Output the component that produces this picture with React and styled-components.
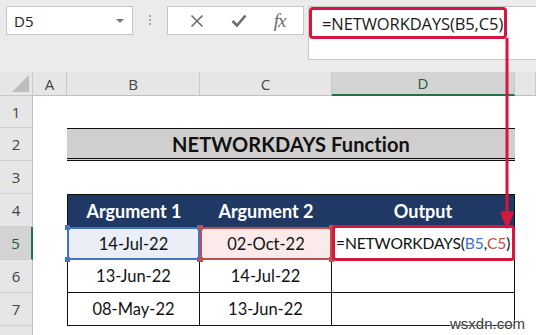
import React from "react";
import styled, { createGlobalStyle, css } from "styled-components";

const GlobalStyle = createGlobalStyle`
  html, body { margin: 0; padding: 0; background: #ffffff; }
  body { font-family: "Open Sans", "Noto Sans", sans-serif; }
`;

const ACCENT = "#d5173f";
const GREEN = "#217346";
const BLUE = "#4472c4";
const RED = "#c0504d";
const COLS = "33px 34px 133px 132px 183px 21px";

const Window = styled.div`
  position: relative;
  width: 536px;
  height: 335px;
  overflow: hidden;
  background: #ffffff;
`;

const FormulaBar = styled.div`
  display: flex;
  align-items: flex-start;
  height: 72px;
  padding: 6px 0 0 6px;
  box-sizing: border-box;
  background: #ebebeb;
`;

const NameBox = styled.div`
  display: flex;
  align-items: center;
  justify-content: space-between;
  width: 127px;
  height: 29px;
  box-sizing: border-box;
  padding: 0 8px 0 7px;
  background: #ffffff;
  border: 1px solid #c6c6c6;
  font-size: 15px;
  color: #222;
`;

const Caret = styled.span`
  width: 0;
  height: 0;
  border-left: 4px solid transparent;
  border-right: 4px solid transparent;
  border-top: 4px solid #777;
`;

const Grip = styled.div`
  display: flex;
  flex-direction: column;
  gap: 2px;
  margin: 9px 16px 0 16px;
  span {
    width: 2px;
    height: 2px;
    background: #a8a8a8;
  }
`;

const ButtonGroup = styled.div`
  display: flex;
  align-items: center;
  justify-content: space-around;
  width: 137px;
  height: 29px;
  box-sizing: border-box;
  padding: 0 4px 0 8px;
  background: #ffffff;
  border: 1px solid #c6c6c6;
`;

const Fx = styled.span`
  font-family: "Liberation Serif", serif;
  font-style: italic;
  font-size: 19px;
  color: #6b6b6b;
  letter-spacing: -1px;
`;

const FormulaInput = styled.div`
  flex: 1;
  height: 54px;
  margin-left: 4px;
  background: #ffffff;
  border: 1px solid #c6c6c6;
  border-right: none;
  box-sizing: border-box;
`;

const Highlight = styled.div`
  display: flex;
  align-items: center;
  width: 198px;
  height: 32px;
  box-sizing: border-box;
  padding-left: 10px;
  border: 3px solid ${ACCENT};
  border-radius: 4px;
  font-size: 16.5px;
  letter-spacing: -0.1px;
  color: #1a1a1a;
  white-space: nowrap;
`;

const Row = styled.div`
  display: grid;
  grid-template-columns: ${COLS};
  height: ${(p) => p.$h}px;
`;

const Corner = styled.div`
  position: relative;
  background: #e6e6e6;
  border-right: 1px solid #c8c8c8;
  border-bottom: 1px solid #c8c8c8;
  &::after {
    content: "";
    position: absolute;
    right: 3px;
    bottom: 3px;
    border-left: 17px solid transparent;
    border-bottom: 17px solid #bdbdbd;
  }
`;

const ColHead = styled.div`
  display: flex;
  align-items: center;
  justify-content: center;
  font-size: 15px;
  color: #444;
  background: ${(p) => (p.$active ? "#d3d3d3" : "#e6e6e6")};
  border-right: 1px solid #c8c8c8;
  box-sizing: border-box;
  border-bottom: ${(p) => (p.$active ? `2px solid ${GREEN}` : "1px solid #bfbfbf")};
  ${(p) => p.$active && css`color: #1e5a3a;`}
`;

const RowHead = styled.div`
  display: flex;
  align-items: center;
  justify-content: center;
  font-size: 15px;
  color: #444;
  box-sizing: border-box;
  background: ${(p) => (p.$active ? "#d3d3d3" : "#e6e6e6")};
  border-bottom: 1px solid #cfcfcf;
  border-right: ${(p) => (p.$active ? `2px solid ${GREEN}` : "1px solid #bfbfbf")};
  ${(p) => p.$active && css`color: #1e5a3a;`}
`;

const Cell = styled.div`
  position: relative;
  display: flex;
  align-items: center;
  justify-content: ${(p) => (p.$left ? "flex-start" : "center")};
  box-sizing: border-box;
  font-family: "Lato", "Carlito", sans-serif;
  font-size: 16px;
  color: #111;
  white-space: nowrap;
  background: ${(p) => p.$bg || "#ffffff"};
  grid-column: ${(p) => (p.$span ? `span ${p.$span}` : "auto")};
`;

const Title = styled(Cell)`
  font-weight: 700;
  font-size: 20px;
  letter-spacing: 0.1px;
  background: #d0cece;
  border-top: 1px solid #111;
  border-bottom: 3px double #111;
`;

const HeadCell = styled(Cell)`
  background: #203864;
  color: #ffffff;
  font-weight: 700;
  font-size: 18px;
  border-top: 1px solid #111;
  ${(p) => p.$first && css`border-left: 1px solid #111;`}
  ${(p) => p.$last && css`border-right: 1px solid #111;`}
`;

const DataCell = styled(Cell)`
  border-right: 1px solid #111;
  border-bottom: 1px solid #111;
  font-size: 16.5px;
  ${(p) => p.$first && css`border-left: 1px solid #111;`}
`;

const RefCell = styled(Cell)`
  border: 2px solid ${(p) => p.$tone};
  font-size: 16.5px;
`;

const Handle = styled.span`
  position: absolute;
  width: 5px;
  height: 5px;
  background: ${(p) => p.$tone};
  ${(p) => (p.$top ? "top: -4px;" : "bottom: -4px;")}
  ${(p) => (p.$right ? "right: -4px;" : "left: -4px;")}
  z-index: 2;
`;

const ActiveCell = styled(Cell)`
  border-right: 1px solid #111;
  border-bottom: 2px solid ${GREEN};
  overflow: visible;
`;

const Callout = styled.div`
  position: absolute;
  left: 0;
  right: -1px;
  top: -2px;
  bottom: -3px;
  display: flex;
  align-items: center;
  padding-left: 1px;
  border: 3px solid ${ACCENT};
  border-radius: 4px;
  font-size: 15.6px;
  letter-spacing: -0.15px;
  z-index: 3;
`;

const Ref = styled.span`
  color: ${(p) => p.$tone};
`;

const Blank = styled.div`
  background: #ffffff;
`;

const Arrow = styled.svg`
  position: absolute;
  left: 500px;
  top: 38px;
  z-index: 4;
`;

const Watermark = styled.div`
  position: absolute;
  right: 11px;
  bottom: 3px;
  font-family: "Liberation Sans", Arial, sans-serif;
  font-size: 15px;
  color: #3a3a3a;
  text-shadow: 0 0 2px #fff, 0 0 2px #fff;
  z-index: 5;
`;

function Corners({ tone }) {
  return (
    <>
      <Handle $tone={tone} $top />
      <Handle $tone={tone} $top $right />
      <Handle $tone={tone} />
      <Handle $tone={tone} $right />
    </>
  );
}

function Formula() {
  return (
    <>
      =NETWORKDAYS(<Ref $tone={BLUE}>B5</Ref>,<Ref $tone={RED}>C5</Ref>)
    </>
  );
}

const rows = [
  ["13-Jun-22", "14-Jul-22"],
  ["08-May-22", "13-Jun-22"],
];

export default function App() {
  return (
    <Window>
      <GlobalStyle />
      <FormulaBar>
        <NameBox>
          D5
          <Caret />
        </NameBox>
        <Grip>
          <span />
          <span />
          <span />
        </Grip>
        <ButtonGroup>
          <svg width="14" height="14" viewBox="0 0 14 14">
            <path d="M1.5 1.5l11 11M12.5 1.5l-11 11" stroke="#6b6b6b" strokeWidth="1.6" />
          </svg>
          <svg width="16" height="13" viewBox="0 0 16 13">
            <path d="M1.5 7l4.5 4.5L14.5 1.5" stroke="#6b6b6b" strokeWidth="2.6" fill="none" />
          </svg>
          <Fx>fx</Fx>
        </ButtonGroup>
        <FormulaInput>
          <Highlight>=NETWORKDAYS(B5,C5)</Highlight>
        </FormulaInput>
      </FormulaBar>

      <Row $h={24}>
        <Corner />
        <ColHead>A</ColHead>
        <ColHead>B</ColHead>
        <ColHead>C</ColHead>
        <ColHead $active>D</ColHead>
        <ColHead />
      </Row>

      <Row $h={32}>
        <RowHead>1</RowHead>
        <Blank />
      </Row>

      <Row $h={33}>
        <RowHead>2</RowHead>
        <Blank />
        <Title $span={3}>NETWORKDAYS Function</Title>
        <Blank />
      </Row>

      <Row $h={33}>
        <RowHead>3</RowHead>
        <Blank />
      </Row>

      <Row $h={33}>
        <RowHead>4</RowHead>
        <Blank />
        <HeadCell $first>Argument 1</HeadCell>
        <HeadCell>Argument 2</HeadCell>
        <HeadCell $last>Output</HeadCell>
        <Blank />
      </Row>

      <Row $h={33}>
        <RowHead $active>5</RowHead>
        <Blank />
        <RefCell $tone={BLUE} $bg="#e9eef7">
          14-Jul-22
          <Corners tone={BLUE} />
        </RefCell>
        <RefCell $tone={RED} $bg="#fbeaea">
          02-Oct-22
          <Corners tone={RED} />
        </RefCell>
        <ActiveCell $left>
          <Callout>
            <Formula />
          </Callout>
        </ActiveCell>
        <Blank />
      </Row>

      {rows.map(([a, b], i) => (
        <Row $h={33} key={a}>
          <RowHead>{6 + i}</RowHead>
          <Blank />
          <DataCell $first>{a}</DataCell>
          <DataCell>{b}</DataCell>
          <DataCell />
          <Blank />
        </Row>
      ))}

      <Row $h={33}>
        <RowHead />
        <Blank />
      </Row>

      <Arrow width="14" height="192" viewBox="0 0 14 192">
        <path d="M7 0V180" stroke={ACCENT} strokeWidth="3" />
        <path d="M1 174L7 190L13 174Z" fill={ACCENT} stroke={ACCENT} strokeWidth="1.5" strokeLinejoin="round" />
      </Arrow>

      <Watermark>wsxdn.com</Watermark>
    </Window>
  );
}
